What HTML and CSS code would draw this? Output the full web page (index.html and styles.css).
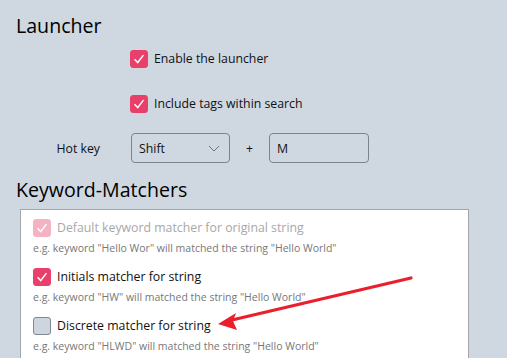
FILE: index.html
```html
<!DOCTYPE html>
<html>
  <head>
    <meta charset="utf-8">
    <title>Settings</title>
    <link rel="stylesheet" href="styles.css">
  </head>
  <body>
    <div class="page">
      <h2 class="section-title">Launcher</h2>

      <div class="launcher">
        <label class="check-row">
          <span class="box checked"><svg viewBox="0 0 18 18"><path d="M4 9.2 L7.6 13 L14 4.6"/></svg></span>
          <span class="check-text">Enable the launcher</span>
        </label>

        <label class="check-row">
          <span class="box checked"><svg viewBox="0 0 18 18"><path d="M4 9.2 L7.6 13 L14 4.6"/></svg></span>
          <span class="check-text">Include tags within search</span>
        </label>

        <div class="hotkey">
          <span class="hotkey-label">Hot key</span>
          <div class="field select">
            <span>Shift</span>
            <svg class="chevron" viewBox="0 0 12 7"><path d="M1 1 L6 6 L11 1"/></svg>
          </div>
          <span class="plus">+</span>
          <div class="field">M</div>
        </div>
      </div>

      <h2 class="section-title second">Keyword-Matchers</h2>

      <div class="matchers">
        <div class="matcher disabled">
          <label class="check-row">
            <span class="box checked"><svg viewBox="0 0 18 18"><path d="M4 9.2 L7.6 13 L14 4.6"/></svg></span>
            <span class="check-text">Default keyword matcher for original string</span>
          </label>
          <p class="hint">e.g. keyword "Hello Wor" will matched the string "Hello World"</p>
        </div>

        <div class="matcher">
          <label class="check-row">
            <span class="box checked"><svg viewBox="0 0 18 18"><path d="M4 9.2 L7.6 13 L14 4.6"/></svg></span>
            <span class="check-text">Initials matcher for string</span>
          </label>
          <p class="hint">e.g. keyword "HW" will matched the string "Hello World"</p>
        </div>

        <div class="matcher">
          <label class="check-row">
            <span class="box"></span>
            <span class="check-text">Discrete matcher for string</span>
          </label>
          <p class="hint">e.g. keyword "HLWD" will matched the string "Hello World"</p>
        </div>
      </div>

      <!-- annotation arrow -->
      <svg class="arrow" width="507" height="358" viewBox="0 0 507 358">
        <path d="M411 278 L232 320" stroke="#ea1f2b" stroke-width="3.2" stroke-linecap="round" fill="none"/>
        <path d="M218 324 L236 313 L233 321 L237 330 Z" fill="#ea1f2b"/>
      </svg>
    </div>
  </body>
</html>
```

FILE: styles.css
```css
html, body {
  margin: 0;
  padding: 0;
  height: 100%;
  overflow: hidden;
}

body {
  background-color: #cfd8e0;
  font-family: "Open Sans", "Noto Sans", sans-serif;
  color: #111;
}

.page {
  position: relative;
  height: 358px;
  overflow: hidden;
  padding: 12px 0 0 0;
  box-sizing: border-box;
}

.section-title {
  margin: 0 0 0 16px;
  font-size: 19.6px;
  font-weight: normal;
  line-height: 28px;
  color: #000;
}

.section-title.second {
  margin-top: 13px;
}

.launcher {
  padding: 10px 0 0 0;
}

.launcher .check-row {
  margin-left: 130px;
  height: 18px;
  margin-bottom: 27px;
}

.check-row {
  display: flex;
  align-items: center;
  gap: 6px;
}

.check-text {
  font-size: 12.3px;
  line-height: 18px;
}

.box {
  flex: none;
  width: 16px;
  height: 16px;
  border: 1px solid #7e8892;
  border-radius: 3px;
  background: #cdd6df;
  display: flex;
}

.box.checked {
  background: #e8406a;
  border-color: #e8406a;
}

.box svg {
  width: 16px;
  height: 16px;
}

.box svg path {
  fill: none;
  stroke: #fff;
  stroke-width: 1.6;
}

/* hot key row */
.hotkey {
  display: flex;
  align-items: center;
  margin-top: -7px;
}

.hotkey-label {
  width: 100px;
  padding-right: 31px;
  text-align: right;
  font-size: 12.3px;
}

.field {
  box-sizing: border-box;
  width: 100px;
  height: 30px;
  border: 1px solid #7b848e;
  border-radius: 4px;
  padding: 0 7px;
  font-size: 12.3px;
  display: flex;
  align-items: center;
}

.select {
  width: 99px;
  justify-content: space-between;
}

.chevron {
  width: 12px;
  height: 7px;
  margin-right: 2px;
}

.chevron path {
  fill: none;
  stroke: #6d7680;
  stroke-width: 1;
}

.plus {
  width: 39px;
  text-align: center;
  font-size: 12.3px;
}

/* matcher list */
.matchers {
  margin: 5px 38px 0 20px;
  background: #fff;
  border: 1px solid #a3a6aa;
  height: 200px;
  padding: 9px 0 0 12px;
}

.matcher {
  height: 49px;
}

.matcher .check-row {
  height: 18px;
}

.hint {
  margin: 4px 0 0 0;
  font-size: 10.5px;
  line-height: 14px;
  color: #777;
}

.disabled .box.checked {
  background: #f5b2c3;
  border-color: #f5b2c3;
}

.disabled .check-text {
  color: #a8a8a8;
}

.arrow {
  position: absolute;
  left: 0;
  top: 0;
  pointer-events: none;
}
```
